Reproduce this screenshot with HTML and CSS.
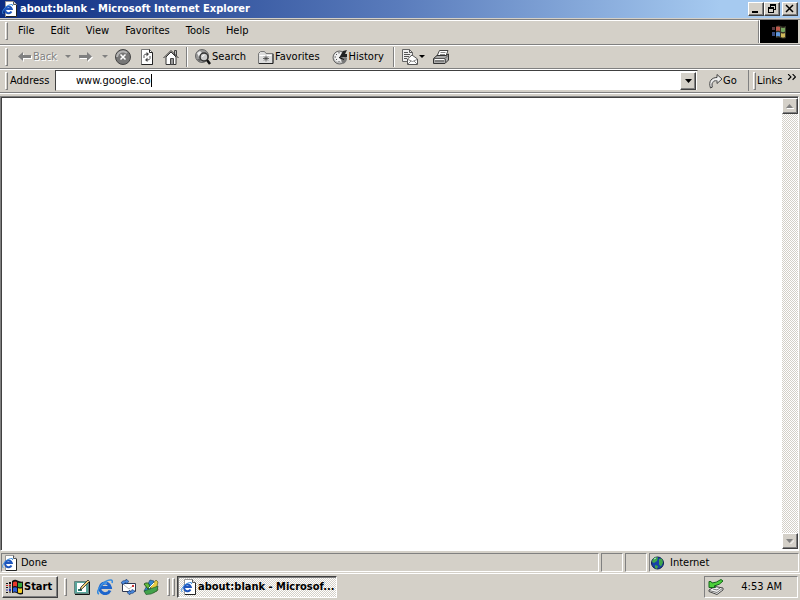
FILE: index.html
```html
<!DOCTYPE html>
<html lang="en">
<head>
<meta charset="utf-8">
<title>about:blank - Microsoft Internet Explorer</title>
<link rel="stylesheet" href="styles.css">
</head>
<body>
<svg class="defs" aria-hidden="true">
  <symbol id="ie-page" viewBox="0 0 16 16">
    <path d="M3.500.5h8l3 3v12h-11z" fill="#fff" stroke="#999"/>
    <path d="M11.500.5v3h3" fill="#ddd" stroke="#555"/>
    <path d="M4 15.500h10.500V4" fill="none" stroke="#222"/>
    <path d="M9.500 10.500A3.400 3.400 0 1 1 9.800 8H3" fill="none" stroke="#1d55bd" stroke-width="2"/>
    <path d="M1.500 13C-2 11 5 3 10 3.500q1 0 .5 1.500" fill="none" stroke="#3d8ee0"/>
  </symbol>
  <symbol id="flag" viewBox="0 0 18 16">
    <path d="M6 2q3-2 5.500-.5t5.500 1V15q-3 1-5.500-.500T6 14z" fill="#111"/>
    <path d="M7 3.500q2-1.500 4-.5v4.500Q9 6.500 7 7.500z" fill="#e8392a"/>
    <path d="M12 3.500q2 1 4 .2v4q-2 1-4 .2z" fill="#35a63a"/>
    <path d="M7 8.800q2-1 4 0v4.500Q9 12 7 13z" fill="#2c5fd8"/>
    <path d="M12 9q2 1 4 .2v4.300q-2 1-4 0z" fill="#f0cc28"/>
    <path d="M3 3h2v2H3zM3 7.500h2v1H3zM3 12.500h2v1H3zM0 4h2v1H0zM0 8h2v1H0zM0 13h2v1H0z" fill="#111"/>
    <path d="M3 5.500h2v1.500H3zM0 6h2v1H0z" fill="#c22"/><path d="M3 9.500h2V12H3zM0 10.500h2v1H0z" fill="#23b"/>
  </symbol>
</svg>

<main class="window">
  <header class="titlebar">
    <svg class="i16"><use href="#ie-page"/></svg>
    <h1>about:blank - Microsoft Internet Explorer</h1>
    <button class="caption" aria-label="Minimize"><svg viewBox="0 0 12 10"><path d="M2 7h6v2H2z"/></svg></button>
    <button class="caption" aria-label="Restore"><svg viewBox="0 0 12 10"><path d="M4 0h6v6H8V5h1V2H5v1H4zM2 3h6v6H2zM3 5v3h4V5z" fill-rule="evenodd"/></svg></button>
    <button class="caption close" aria-label="Close"><svg viewBox="0 0 12 10"><path d="M2 1l7 7m0-7l-7 7" fill="none" stroke="#000" stroke-width="1.500"/></svg></button>
  </header>

  <div class="menurow">
    <nav class="menubar">
      <span class="grip"></span>
      <button>File</button><button>Edit</button><button>View</button><button>Favorites</button><button>Tools</button><button>Help</button>
    </nav>
    <div class="brand"><svg viewBox="0 0 18 16"><path d="M6 2q3-1 5 0t5 0v12q-3 1-5 0t-5 0z" fill="#383628"/><path d="M6 3q2-1 4 0v4Q8 6 6 7z" fill="#c05a4c"/><path d="M11 3.500q2 1 4 0v4q-2 1-4 0z" fill="#76a860"/><path d="M6 8.500q2-1 4 0v4q-2-1-4 0z" fill="#5f98de"/><path d="M11 9q2 1 4 0v4q-2 1-4 0z" fill="#ceb85a"/><path d="M2 3h3v3H2z" fill="#5a3a40"/><path d="M2 8h3v4H2z" fill="#3b4e80"/></svg></div>
  </div>

  <div class="toolbar">
    <span class="grip"></span>
    <button class="back" disabled><svg viewBox="0 0 14 12" class="arrow"><path d="M6 2v3h8v3H6v3L1 6.500z" fill="#fff"/><path d="M5 1v3h8v3H5v3L0 5.500z" fill="#808080"/></svg>Back</button>
    <button class="drop" disabled aria-label="Back history"><svg viewBox="0 0 6 4"><path d="M0 0h6L3 3z"/></svg></button>
    <button class="icon" disabled aria-label="Forward"><svg viewBox="0 0 14 12" class="arrow"><path d="M9 2v3H1v3h8v3l5-4.500z" fill="#fff"/><path d="M8 1v3H0v3h8v3l5-4.500z" fill="#808080"/></svg></button>
    <button class="drop" disabled aria-label="Forward history"><svg viewBox="0 0 6 4"><path d="M0 0h6L3 3z"/></svg></button>
    <button class="icon" aria-label="Stop"><svg class="i16" viewBox="0 0 16 16"><circle cx="8" cy="8" r="7.500" fill="#777" stroke="#444"/><path d="M2 8a6 6 0 0 1 10-4" fill="none" stroke="#b4b4b4" stroke-width="2"/><path d="M5.500 5.500l5 5m0-5l-5 5" stroke="#fff" stroke-width="1.500"/></svg></button>
    <button class="icon" aria-label="Refresh"><svg class="i16" viewBox="0 0 16 16"><path d="M2.500.5h8l3 3v12h-11z" fill="#fff" stroke="#777"/><path d="M10.500.5v3h3v12h-11" fill="none" stroke="#222"/><path d="M5 9V6.500q0-1.500 3-1.500M11 7v2.500q0 1.500-3 1.500" fill="none" stroke="#555"/><path d="M7.500 3v4.500L10 5zM8.500 8.500V13L6 11z" fill="#444"/></svg></button>
    <button class="icon" aria-label="Home"><svg class="i16" viewBox="0 0 16 16"><path d="M11.500 1.500h2V7h-2z" fill="#bbb" stroke="#444"/><path d="M3 8l5-5 5 5v7.500H3z" fill="#fff" stroke="#333"/><path d="M.5 9L8 1.500 15.500 9" fill="none" stroke="#333"/><path d="M7.500 9.500h3v6h-3z" fill="#999" stroke="#444"/></svg></button>
    <span class="sep"></span>
    <button class="label"><svg class="i16" viewBox="0 0 16 16"><circle cx="7" cy="7" r="6.500" fill="#999" stroke="#666"/><path d="M2 4l3-2 2 2-3 4z" fill="#eee"/><path d="M2 10l3 3 1-3z" fill="#666"/><circle cx="9" cy="8" r="4" fill="#ccc" stroke="#333" stroke-width="1.500"/><path d="M7.500 8q0-2 2-2" fill="none" stroke="#fff"/><path d="M12 11l3 4" stroke="#111" stroke-width="2.500"/></svg>Search</button>
    <button class="label"><svg class="i16" viewBox="0 0 16 16"><path d="M.5 4.500l2-2h4l1.500 2h7v10H.5z" fill="#ddd" stroke="#777"/><path d="M1 14.500h14V5" fill="none" stroke="#222"/><path d="M1.500 6.500h12" stroke="#fff"/><path d="M8 6.500v6M5 9.500h6M6 7.500l4 4m0-4l-4 4" stroke="#444" stroke-width=".8"/></svg>Favorites</button>
    <button class="label"><svg class="i16" viewBox="0 0 16 16"><circle cx="7.500" cy="8.500" r="6.500" fill="#bbb" stroke="#666"/><circle cx="7" cy="8" r="5" fill="#f0f0f0"/><path d="M7 3v1.500M2.500 8H4m3 5v-1M4 5l1 1m-1 5l1-1" stroke="#555"/><path d="M7 9l4-7 4-1-2 4h2v3z" fill="#222"/><path d="M8 9h7q0 4-4 6" fill="#777"/><path d="M7 8.500l5 2" stroke="#111"/></svg>History</button>
    <span class="sep"></span>
    <button class="mail" aria-label="Mail"><svg class="i16" viewBox="0 0 16 16"><path d="M.5.5h7l3 3v9H.5z" fill="#eee" stroke="#666"/><path d="M7.500.5v3h3M2 3.500h4M2 5.500h6M2 7.500h5M2 9.500h3" fill="none" stroke="#555"/><path d="M5.500 10l4.500-4 5.500 4v5.500h-10z" fill="#fff" stroke="#555"/><path d="M6 10.500l4.500 2 4.500-2M6 15l3-3m6 3l-3-3" fill="none" stroke="#888"/></svg><svg class="tri" viewBox="0 0 6 4"><path d="M0 0h6L3 3z"/></svg></button>
    <button class="icon" aria-label="Print"><svg class="i16" viewBox="0 0 16 16"><path d="M4 7l2.500-5.500H15L13 7z" fill="#fff" stroke="#444"/><path d="M7.500 3.500h5M7 5.500h5" stroke="#888"/><path d="M.5 9.500L4 6.500h9l2.500-1.500v6L12 14.500H.5z" fill="#aaa" stroke="#333"/><path d="M1 9.500h11l3-3M12.500 10v4M2 12h9" fill="none" stroke="#555"/><path d="M2 10.500h9" stroke="#fff"/></svg></button>
  </div>

  <form class="address">
    <span class="grip"></span>
    <label for="url">Address</label>
    <div class="combo">
      <input id="url" type="text" value="www.google.co" size="13">
      <span class="caret"></span>
      <button type="button" class="raised" aria-label="Show addresses"><svg viewBox="0 0 7 4"><path d="M0 0h7L3.500 4z"/></svg></button>
    </div>
    <button type="button" class="go"><svg viewBox="0 0 14 16"><path d="M1.500 15C-1 8 3 4.500 8 4.500v-3l5 4.500-5 4.500v-3C4 7.500 2.500 10 3.500 14z" fill="#eee" stroke="#444"/><path d="M3 14q-1-7 5-6.500" fill="none" stroke="#888"/></svg>Go</button>
    <div class="links"><span class="grip"></span><button type="button">Links</button><svg viewBox="0 0 8 6"><path d="M1 0l2.500 2.500L1 5M5 0l2.500 2.500L5 5" fill="none" stroke="#000"/></svg></div>
  </form>

  <section class="view">
    <div class="page"></div>
    <div class="scroll">
      <button class="raised" disabled aria-label="Scroll up"><svg viewBox="0 0 8 5"><path d="M1 4h7v1H1z" fill="#fff"/><path d="M0 4h7L3.500 0z" fill="#808080"/></svg></button>
      <button class="raised" disabled aria-label="Scroll down"><svg viewBox="0 0 8 5"><path d="M4 5l4-4v1L5 5z" fill="#fff"/><path d="M0 0h7L3.500 4z" fill="#808080"/></svg></button>
    </div>
  </section>

  <footer class="status">
    <div class="pane done"><svg class="i16"><use href="#ie-page"/></svg>Done</div>
    <div class="pane small"></div>
    <div class="pane small"></div>
    <div class="pane zone"><svg class="i16" viewBox="0 0 16 16"><circle cx="7.500" cy="8" r="6" fill="#1741a8" stroke="#0a1c50"/><path d="M3 4q3-3 5-1.500L7 6 4 8 2 7zM9 4l3-.500 1 4-2 4-2-2zM5 10l3 1-1 3-2-1z" fill="#3fa64a"/><path d="M4 4l2-1" stroke="#bfe8e0"/></svg>Internet</div>
  </footer>
</main>

<footer class="taskbar">
  <button class="start"><svg viewBox="0 0 18 16"><use href="#flag"/></svg>Start</button>
  <span class="grip"></span>
  <nav class="quick">
    <button aria-label="Show Desktop"><svg class="i16" viewBox="0 0 16 16"><path d="M.5 2.500h14v12H.5z" fill="#5aa69c" stroke="#66847e"/><path d="M3 4h9v9H3z" fill="#fff"/><path d="M4 10h4v2H4z" fill="#287c70"/><path d="M6 11l1-3 7-7 1.500 1.500-7 7z" fill="#efd077" stroke="#222" stroke-width=".8"/><path d="M1 15.500h14.500V3" fill="none" stroke="#111"/></svg></button>
    <button aria-label="Internet Explorer"><svg class="i16" viewBox="0 0 16 16"><path d="M13 11.500A5.300 5.300 0 1 1 13.400 8.500H4" fill="none" stroke="#1c64cc" stroke-width="3"/><path d="M4 6q2-3 6-2" fill="none" stroke="#7abff5"/><path d="M2 15C-3 13 8 0 14 1q2 .5 1 3" fill="none" stroke="#348be0" stroke-width="1.500"/></svg></button>
    <button aria-label="Outlook Express"><svg class="i16" viewBox="0 0 16 16"><path d="M2.500 4.500h13v8h-13z" fill="#fff" stroke="#303850"/><path d="M4 6l5 4 5-4" fill="none" stroke="#bbb"/><path d="M12 6h2v2h-2z" fill="#c33"/><path d="M1 4q1-3 5-2.500V0l3 2.500L6 5V3.500q-2 0-2 2zM15 12q-1 3-5 2.500V16l-3-2.500L10 11v1.500q2 0 2-2z" fill="#4a8ade" stroke="#173a75" stroke-width=".6"/></svg></button>
    <button aria-label="Launch MSN"><svg class="i16" viewBox="0 0 16 16"><path d="M7 1l4 1-2 6-5 6-3-2z" fill="#2f86d0" stroke="#123d58" stroke-width=".6"/><path d="M1 5q4-3 6 2l-2 3z" fill="#65bd3c" stroke="#255a24"/><path d="M8 7l5-6 2 2-1 4 1 4-5 3-3-2z" fill="#e7cd42" stroke="#4a4a16" stroke-width=".6"/><path d="M1 12l6-2 8-3-1 5-6 3-5 .5z" fill="#43a34c" stroke="#184f25" stroke-width=".6"/><path d="M6 9l5-5" stroke="#fff"/></svg></button>
  </nav>
  <span class="grip"></span><span class="grip second"></span>
  <button class="task"><svg class="i16"><use href="#ie-page"/></svg>about:blank - Microsof...</button>
  <div class="tray"><svg class="i16" viewBox="0 0 16 16"><path d="M1 11l6-3.500 8 1.500v2l-6 4.500-8-3z" fill="#f4f4f4" stroke="#444"/><path d="M1 11.500l8 2 6-4.500M5 10l4 1 3-2" fill="none" stroke="#777"/><path d="M1 2.500h2l1 1.500q4 0 9-3.500l2 1.500q-3 4-9 5l1.500 1.500H1z" fill="#4cd03a" stroke="#14651b"/></svg><time>4:53 AM</time></div>
</footer>
</body>
</html>
```
FILE: styles.css
```css
:root {
  --face: #d4d0c8;
  --shade: #808080;
  --dark: #404040;
}

* { box-sizing: border-box; }

body {
  margin: 0;
  height: 100vh;
  display: flex;
  flex-direction: column;
  overflow: hidden;
  background: var(--face);
  color: #000;
  font: 11px/14px Tahoma, "DejaVu Sans Condensed", "Noto Sans", sans-serif;
}

button {
  display: flex;
  align-items: center;
  margin: 0;
  padding: 0;
  border: 0;
  background: none;
  color: inherit;
  font: inherit;
  white-space: nowrap;
}

svg { display: block; flex: none; }
.defs { position: absolute; width: 0; height: 0; }
.i16 { width: 16px; height: 16px; }

.window { flex: 1; min-height: 0; display: flex; flex-direction: column; }

.titlebar {
  flex: none;
  display: flex;
  align-items: center;
  height: 18px;
  padding: 0 2px;
  background: linear-gradient(to right, #0c2c80, #5a7cbc 50%, #a6caf0 90%);
  color: #fff;
}
.titlebar h1 { flex: 1; margin: 0 0 0 2px; font-size: 11px; font-weight: bold; }

.caption, .raised {
  justify-content: center;
  background: var(--face);
  border: 1px solid;
  border-color: #fff var(--dark) var(--dark) #fff;
  box-shadow: inset -1px -1px var(--shade);
}
.caption { width: 16px; height: 14px; color: #000; }
.caption svg { width: 12px; height: 10px; }
.close { margin-left: 2px; }

.grip {
  flex: none;
  width: 3px;
  height: 18px;
  border: 1px solid;
  border-color: #fff var(--shade) var(--shade) #fff;
}

.menurow {
  flex: none;
  display: flex;
  height: 26px;
  margin-top: 1px;
  padding: 0 2px 1px 0;
  border-top: 1px solid var(--shade);
  border-bottom: 1px solid var(--shade);
}
.menubar {
  flex: 1;
  display: flex;
  align-items: center;
  padding: 0 0 2px 5px;
  border-top: 1px solid #fff;
  border-right: 1px solid var(--shade);
}
.menubar button { padding: 0 8px; }
.menubar .grip { margin-right: 2px; }
.brand { width: 39px; display: flex; align-items: center; justify-content: center; background: #000; border-left: 1px solid #fff; }
.brand svg { width: 18px; height: 16px; }

.toolbar {
  flex: none;
  display: flex;
  align-items: center;
  height: 23px;
  padding-left: 5px;
  border-top: 1px solid #fff;
}
.toolbar .grip { margin-right: 10px; }
.toolbar button { height: 22px; }
.toolbar button:disabled { color: var(--shade); text-shadow: 1px 1px #fff; }
.arrow { width: 14px; height: 12px; }
.back { width: 43px; gap: 1px; }
.drop, .tri { fill: currentColor; }
.toolbar .drop { width: 13px; justify-content: center; }
.drop svg, .tri { width: 6px; height: 4px; }
.icon { width: 24px; justify-content: center; }
.label { padding: 0 6px; gap: 1px; }
.sep {
  width: 2px;
  height: 20px;
  margin: 0 1px 0 3px;
  border-left: 1px solid var(--shade);
  border-right: 1px solid #fff;
}
.mail { padding: 0 4px 0 6px; gap: 1px; }

.address {
  flex: none;
  display: flex;
  align-items: center;
  height: 25px;
  margin: 0;
  padding: 0 2px 0 5px;
  border-top: 1px solid var(--shade);
  border-bottom: 1px solid var(--shade);
  box-shadow: inset 0 1px #fff, 0 1px #fff;
}
.address label { width: 47px; padding-left: 2px; }
.combo {
  flex: 1;
  display: flex;
  align-items: center;
  height: 21px;
  padding: 0 1px 0 20px;
  background: #fff;
  border: 1px solid;
  border-color: var(--dark) var(--face) var(--face) var(--dark);
}
.combo input {
  field-sizing: content;
  padding: 0;
  border: 0;
  outline: 0;
  background: none;
  color: inherit;
  font: inherit;
}
.caret { width: 1px; height: 13px; background: #000; }
.combo .raised { width: 16px; height: 18px; margin-left: auto; }
.combo .raised svg { width: 7px; height: 4px; }
.go { width: 51px; height: 21px; padding-left: 11px; border-right: 1px solid var(--shade); }
.go svg { width: 14px; height: 16px; }
.links { display: flex; align-items: center; width: 49px; padding-left: 4px; }
.links button { margin: 0 5px 0 1px; }
.links > svg { width: 9px; height: 7px; margin-bottom: 6px; }

.view {
  flex: 1;
  min-height: 0;
  display: flex;
  margin: 3px 1px 0 0;
  background: #fff;
  border: 1px solid;
  border-color: var(--shade) #fff #fff var(--shade);
  box-shadow: inset 1px 1px var(--dark);
}
.page { flex: 1; }
.scroll {
  display: flex;
  flex-direction: column;
  justify-content: space-between;
  width: 16px;
  margin: 1px 0;
  background: repeating-conic-gradient(#fff 0 25%, var(--face) 0 50%) 0 0 / 2px 2px;
}
.scroll .raised { width: 16px; height: 16px; }
.scroll svg { width: 8px; height: 5px; }

.status { flex: none; display: flex; gap: 2px; height: 22px; padding: 2px 1px 1px; }
.pane {
  display: flex;
  align-items: center;
  border: 1px solid;
  border-color: var(--shade) #fff #fff var(--shade);
}
.done { flex: 1; gap: 3px; }
.small { width: 22px; }
.zone { width: 150px; gap: 4px; }

.taskbar {
  flex: none;
  display: flex;
  align-items: center;
  height: 27px;
  padding: 0 2px 1px;
  border-top: 1px solid #fff;
}
.start {
  width: 56px;
  height: 22px;
  padding-left: 3px;
  border: 1px solid;
  border-color: #fff var(--dark) var(--dark) #fff;
  box-shadow: inset -1px -1px var(--shade);
  font-weight: bold;
}
.start svg { width: 18px; height: 16px; }
.taskbar .grip { margin-left: 6px; }
.taskbar .second { margin-left: 2px; }
.quick { display: flex; gap: 7px; padding: 0 2px 0 7px; }
.task {
  width: 160px;
  height: 22px;
  margin-left: 2px;
  padding: 1px 0 0 3px;
  gap: 1px;
  overflow: hidden;
  background: repeating-conic-gradient(#fff 0 25%, var(--face) 0 50%) 0 0 / 2px 2px;
  border: 1px solid;
  border-color: var(--dark) #fff #fff var(--dark);
  box-shadow: inset 1px 1px var(--shade);
  font-weight: bold;
}
.tray {
  display: flex;
  align-items: center;
  justify-content: space-between;
  width: 94px;
  height: 22px;
  margin-left: auto;
  padding: 0 15px 0 3px;
  border: 1px solid;
  border-color: var(--shade) #fff #fff var(--shade);
}
```
